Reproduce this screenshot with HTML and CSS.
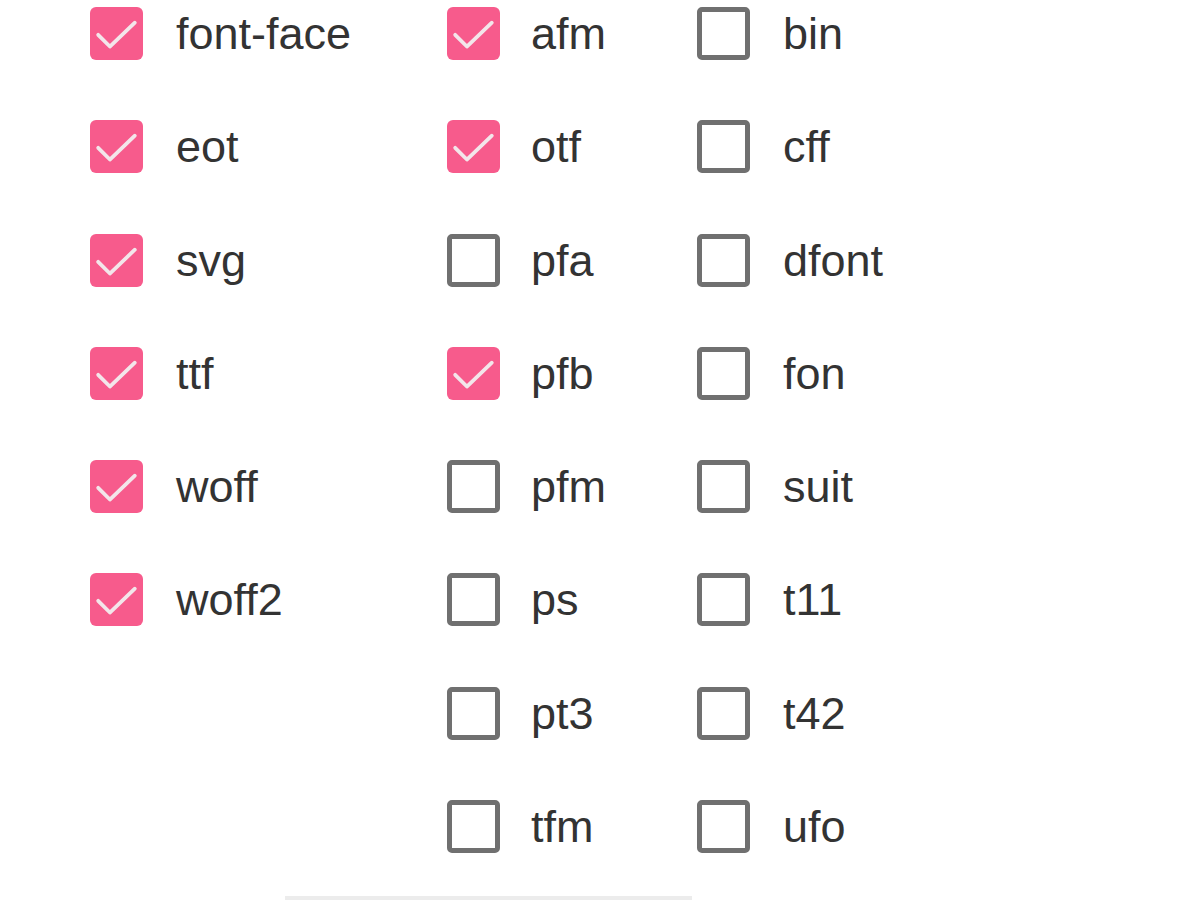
FILE: index.html
```html
<!DOCTYPE html>
<html>
<head>
<meta charset="utf-8">
<link rel="stylesheet" href="styles.css">
</head>
<body>
<div class="grid">
  <div class="col col-1">
    <label class="item"><span class="box on"><svg viewBox="0 0 24 24"><path d="M3.7 12.6l5.3 5.3 11.3-10.8"/></svg></span><span class="txt">font-face</span></label>
    <label class="item"><span class="box on"><svg viewBox="0 0 24 24"><path d="M3.7 12.6l5.3 5.3 11.3-10.8"/></svg></span><span class="txt">eot</span></label>
    <label class="item"><span class="box on"><svg viewBox="0 0 24 24"><path d="M3.7 12.6l5.3 5.3 11.3-10.8"/></svg></span><span class="txt">svg</span></label>
    <label class="item"><span class="box on"><svg viewBox="0 0 24 24"><path d="M3.7 12.6l5.3 5.3 11.3-10.8"/></svg></span><span class="txt">ttf</span></label>
    <label class="item"><span class="box on"><svg viewBox="0 0 24 24"><path d="M3.7 12.6l5.3 5.3 11.3-10.8"/></svg></span><span class="txt">woff</span></label>
    <label class="item"><span class="box on"><svg viewBox="0 0 24 24"><path d="M3.7 12.6l5.3 5.3 11.3-10.8"/></svg></span><span class="txt">woff2</span></label>
  </div>
  <div class="col col-2">
    <label class="item"><span class="box on"><svg viewBox="0 0 24 24"><path d="M3.7 12.6l5.3 5.3 11.3-10.8"/></svg></span><span class="txt">afm</span></label>
    <label class="item"><span class="box on"><svg viewBox="0 0 24 24"><path d="M3.7 12.6l5.3 5.3 11.3-10.8"/></svg></span><span class="txt">otf</span></label>
    <label class="item"><span class="box"></span><span class="txt">pfa</span></label>
    <label class="item"><span class="box on"><svg viewBox="0 0 24 24"><path d="M3.7 12.6l5.3 5.3 11.3-10.8"/></svg></span><span class="txt">pfb</span></label>
    <label class="item"><span class="box"></span><span class="txt">pfm</span></label>
    <label class="item"><span class="box"></span><span class="txt">ps</span></label>
    <label class="item"><span class="box"></span><span class="txt">pt3</span></label>
    <label class="item"><span class="box"></span><span class="txt">tfm</span></label>
  </div>
  <div class="col col-3">
    <label class="item"><span class="box"></span><span class="txt">bin</span></label>
    <label class="item"><span class="box"></span><span class="txt">cff</span></label>
    <label class="item"><span class="box"></span><span class="txt">dfont</span></label>
    <label class="item"><span class="box"></span><span class="txt">fon</span></label>
    <label class="item"><span class="box"></span><span class="txt">suit</span></label>
    <label class="item"><span class="box"></span><span class="txt">t11</span></label>
    <label class="item"><span class="box"></span><span class="txt">t42</span></label>
    <label class="item"><span class="box"></span><span class="txt">ufo</span></label>
  </div>
</div>
<div class="rule"></div>
</body>
</html>
```

FILE: styles.css
```css
html, body {
  margin: 0;
  padding: 0;
  background: #ffffff;
}
body {
  width: 1200px;
  height: 900px;
  overflow: hidden;
  position: relative;
  font-family: "Liberation Sans", Arial, sans-serif;
}
.grid {
  display: grid;
  grid-template-columns: 357px 250px auto;
  padding: 7px 0 0 90px;
}
.col {
  display: flex;
  flex-direction: column;
  gap: 60.3px;
}
.item {
  display: flex;
  align-items: center;
  height: 53px;
}
.box {
  box-sizing: border-box;
  width: 53px;
  height: 53px;
  border: 5px solid #707070;
  border-radius: 5px;
  background: #fff;
  flex: none;
  display: flex;
  align-items: center;
  justify-content: center;
}
.box.on {
  background: #f75b8c;
  border: none;
  border-radius: 6px;
}
.box svg {
  width: 53px;
  height: 53px;
  fill: none;
  stroke: #f3e6ea;
  stroke-width: 1.7;
  stroke-linecap: round;
  stroke-linejoin: round;
}
.txt {
  margin-left: 33px;
  font-size: 45px;
  color: #333333;
  line-height: 1;
}
.col-2 .txt {
  margin-left: 31px;
}
.rule {
  position: absolute;
  left: 285px;
  top: 896px;
  width: 407px;
  height: 4px;
  background: #ececec;
}
```
